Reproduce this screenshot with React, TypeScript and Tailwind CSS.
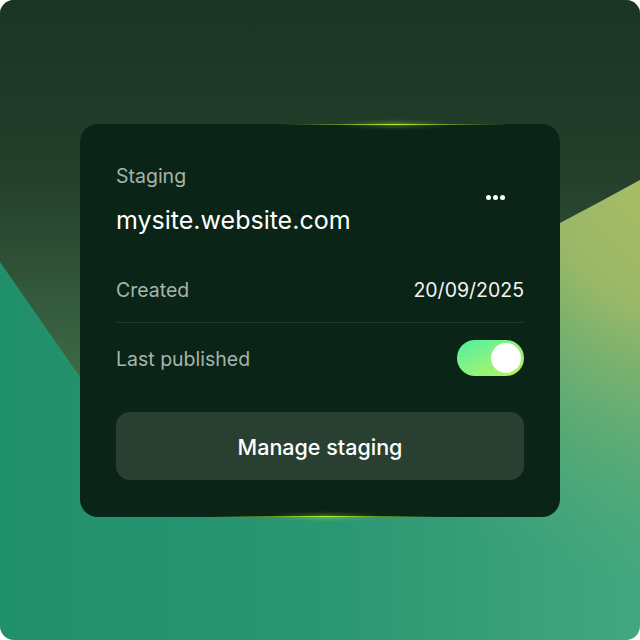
import React from "react";

function Background() {
  return (
    <svg
      width="640"
      height="640"
      viewBox="0 0 640 640"
      className="absolute inset-0"
      aria-hidden="true"
    >
      <defs>
        <linearGradient id="base" x1="0" y1="0" x2="640" y2="0" gradientUnits="userSpaceOnUse">
          <stop offset="0" stopColor="#20906b" />
          <stop offset="0.5" stopColor="#2a9672" />
          <stop offset="1" stopColor="#42a77f" />
        </linearGradient>
        <radialGradient id="glow" cx="690" cy="170" r="420" gradientUnits="userSpaceOnUse">
          <stop offset="0" stopColor="#b1bf63" stopOpacity="1" />
          <stop offset="0.35" stopColor="#a3ba65" stopOpacity="0.9" />
          <stop offset="0.7" stopColor="#7bb26c" stopOpacity="0.4" />
          <stop offset="1" stopColor="#5aaa73" stopOpacity="0" />
        </radialGradient>
        <linearGradient id="dark" x1="0" y1="0" x2="0" y2="400" gradientUnits="userSpaceOnUse">
          <stop offset="0" stopColor="#1b3424" />
          <stop offset="0.45" stopColor="#253f2c" />
          <stop offset="1" stopColor="#406f49" />
        </linearGradient>
      </defs>
      <rect x="0" y="0" width="640" height="640" fill="url(#base)" />
      <rect x="0" y="0" width="640" height="640" fill="url(#glow)" />
      <path
        d="M0,0 H640 V180 Q600,202 560,223 L300,500 L80,377 L0,262 Z"
        fill="url(#dark)"
      />
    </svg>
  );
}

export default function App() {
  return (
    <div className="w-[640px] h-[640px] bg-white">
      <div
        className="relative w-[640px] h-[640px] rounded-[14px] overflow-hidden flex items-center justify-center"
        style={{ fontFamily: "Inter, 'Noto Sans', sans-serif" }}
      >
        <Background />
        <div className="relative w-[480px] h-[393px] rounded-[18px] bg-[#0a2418] px-[36px] pt-[40px] pb-[36px] flex flex-col">
          {/* top glow */}
          <div className="absolute top-0 left-[200px] w-[230px] h-[1px] bg-linear-to-r from-transparent via-[#b6ef3f] to-transparent" />
          <div className="absolute top-[-1px] left-[260px] w-[110px] h-[3px] blur-[2px] bg-linear-to-r from-transparent via-[#b6ef3f]/60 to-transparent" />
          {/* bottom glow */}
          <div className="absolute bottom-0 left-[130px] w-[230px] h-[1px] bg-linear-to-r from-transparent via-[#b6ef3f] to-transparent" />
          <div className="absolute bottom-[-1px] left-[190px] w-[110px] h-[3px] blur-[2px] bg-linear-to-r from-transparent via-[#b6ef3f]/60 to-transparent" />

          <div className="flex items-center justify-between">
            <div className="flex flex-col gap-[16px]">
              <div className="text-[19.5px] leading-[24px] text-[#a7b3ab]">Staging</div>
              <div className="text-[25px] leading-[32px] text-white">mysite.website.com</div>
            </div>
            <button className="w-[40px] h-[40px] mr-[9px] mb-[5px] flex items-center justify-center gap-[2px]">
              <span className="w-[5px] h-[5px] rounded-full bg-white" />
              <span className="w-[5px] h-[5px] rounded-full bg-white" />
              <span className="w-[5px] h-[5px] rounded-full bg-white" />
            </button>
          </div>

          <div className="mt-[40px] flex items-center justify-between h-[28px]">
            <span className="text-[19.5px] text-[#a7b3ab] pt-[3px]">Created</span>
            <span className="text-[19.5px] text-[#f2f4f2] pt-[3px]">20/09/2025</span>
          </div>

          <div className="mt-[18px] h-px bg-[#223a2c]" />

          <div className="mt-[17px] flex items-center justify-between h-[36px]">
            <span className="text-[19.5px] text-[#a7b3ab] pt-[4px]">Last published</span>
            <div className="w-[67px] h-[36px] rounded-full bg-linear-to-br from-[#44f0a2] to-[#b6f352] flex items-center justify-end pr-[3px]">
              <div className="w-[30px] h-[30px] rounded-full bg-white" />
            </div>
          </div>

          <button className="mt-[36px] h-[68px] w-full rounded-[14px] bg-[#293f32] text-white text-[21.5px] font-medium pt-[4px]">
            Manage staging
          </button>
        </div>
      </div>
    </div>
  );
}
